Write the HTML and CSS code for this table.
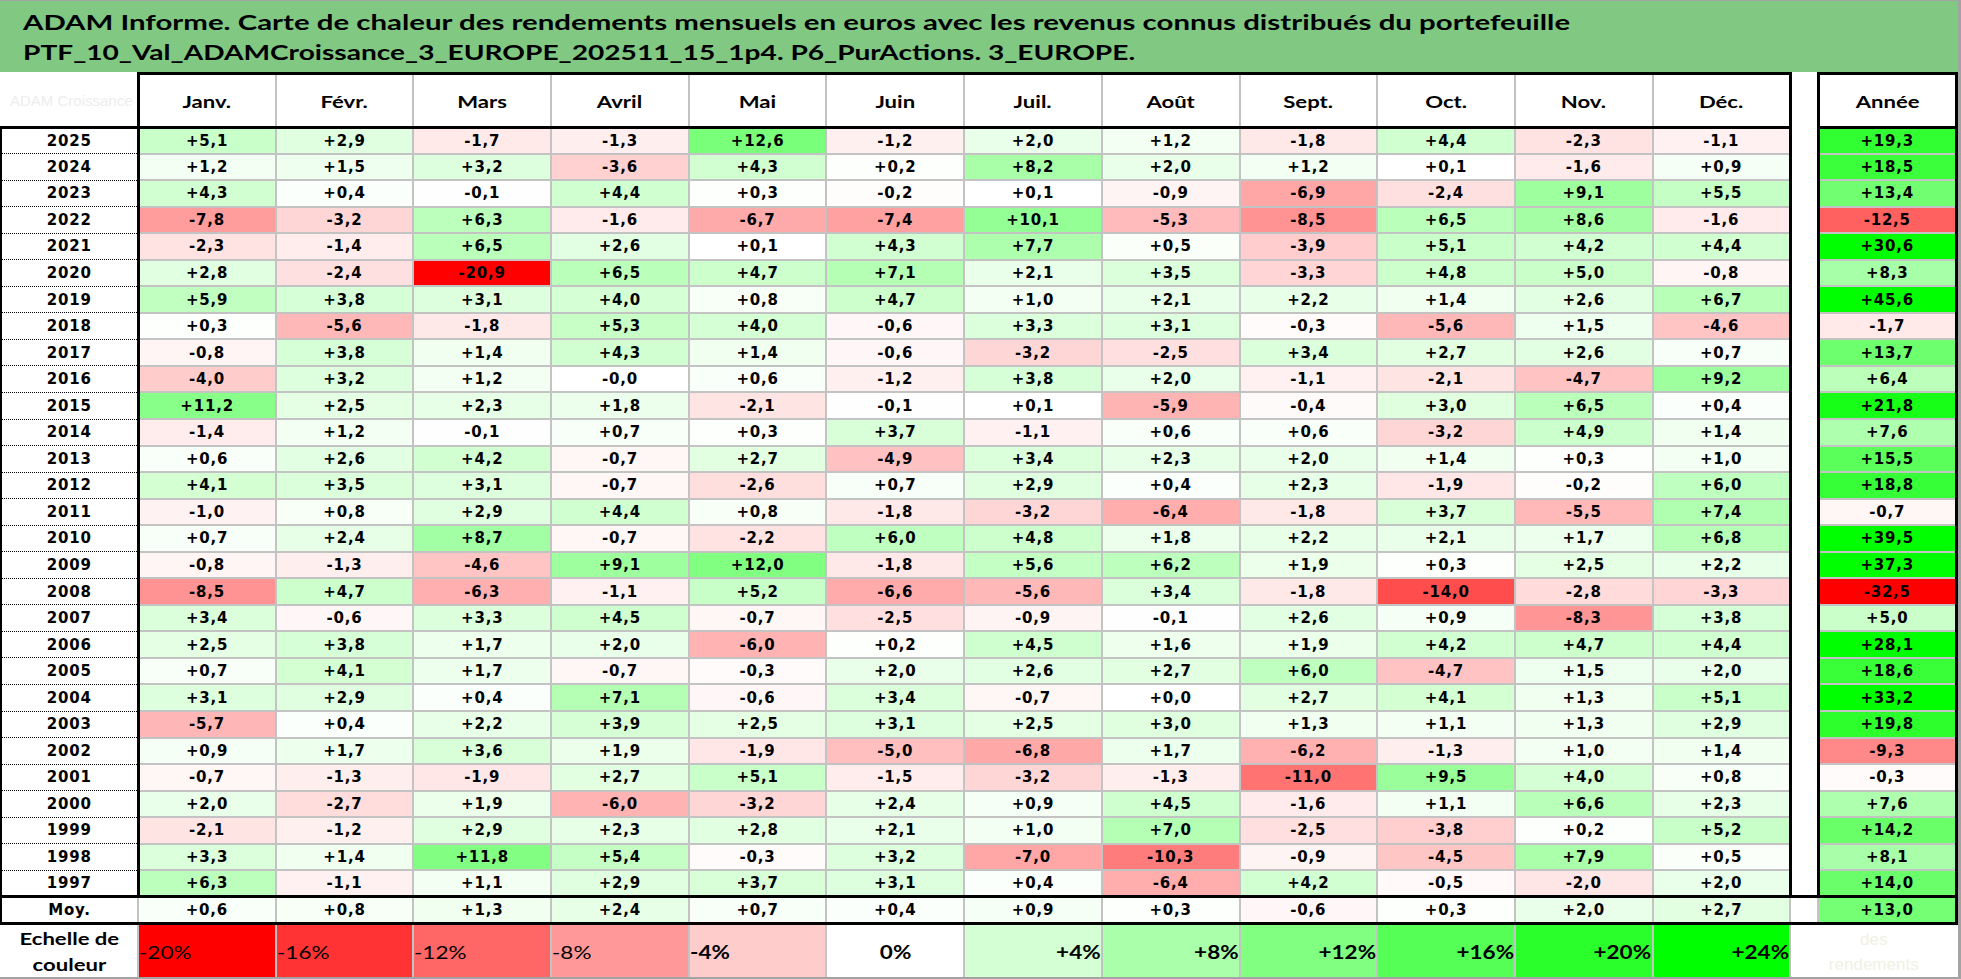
FILE: index.html
```html
<!DOCTYPE html>
<html lang="fr">
<head>
<meta charset="utf-8">
<title>ADAM Informe – Carte de chaleur</title>
<link rel="stylesheet" href="styles.css">
</head>
<body>
<div class="frame">
  <div class="title">
    <div class="title-line"><span class="stretch l1">ADAM Informe. Carte de chaleur des rendements mensuels en euros avec les revenus connus distribués du portefeuille</span></div>
    <div class="title-line"><span class="stretch l2">PTF_10_Val_ADAMCroissance_3_EUROPE_202511_15_1p4. P6_PurActions. 3_EUROPE.</span></div>
  </div>
  <table class="heat">
    <colgroup>
      <col class="c-lab">
      <col class="c-m"><col class="c-m"><col class="c-m"><col class="c-m"><col class="c-m"><col class="c-m">
      <col class="c-m"><col class="c-m"><col class="c-m"><col class="c-m"><col class="c-m"><col class="c-m">
      <col class="c-gap">
      <col class="c-yr">
    </colgroup>
    <thead>
      <tr class="hdr">
        <th class="corner"><div class="ghost">ADAM Croissance</div></th>
        <th class="mh"><span class="hx">Janv.</span></th>
        <th class="mh"><span class="hx">Févr.</span></th>
        <th class="mh"><span class="hx">Mars</span></th>
        <th class="mh"><span class="hx">Avril</span></th>
        <th class="mh"><span class="hx">Mai</span></th>
        <th class="mh"><span class="hx">Juin</span></th>
        <th class="mh"><span class="hx">Juil.</span></th>
        <th class="mh"><span class="hx">Août</span></th>
        <th class="mh"><span class="hx">Sept.</span></th>
        <th class="mh"><span class="hx">Oct.</span></th>
        <th class="mh"><span class="hx">Nov.</span></th>
        <th class="mh last"><span class="hx">Déc.</span></th>
        <th class="gap"></th>
        <th class="yh"><span class="hx">Année</span></th>
      </tr>
    </thead>
    <tbody id="rows"></tbody>
    <tbody>
      <tr class="scale">
        <th class="sc-lab"><span class="hx">Echelle de<br>couleur</span></th>
        <td class="sc neg s-20"><span class="sx">-20%</span></td>
        <td class="sc neg s-16"><span class="sx">-16%</span></td>
        <td class="sc neg s-12"><span class="sx">-12%</span></td>
        <td class="sc neg s-8"><span class="sx">-8%</span></td>
        <td class="sc neg b s-4"><span class="sx">-4%</span></td>
        <td class="sc zero s0"><span class="sx">0%</span></td>
        <td class="sc pos s4"><span class="sx">+4%</span></td>
        <td class="sc pos s8"><span class="sx">+8%</span></td>
        <td class="sc pos s12"><span class="sx">+12%</span></td>
        <td class="sc pos s16"><span class="sx">+16%</span></td>
        <td class="sc pos s20"><span class="sx">+20%</span></td>
        <td class="sc pos s24"><span class="sx">+24%</span></td>
        <td class="sc-end" colspan="2">des<br>rendements</td>
      </tr>
    </tbody>
  </table>
</div>
<script src="script.js"></script>
</body>
</html>
```

FILE: styles.css
```css
* { box-sizing: border-box; }
html, body { margin: 0; padding: 0; background: #ffffff; }

.frame {
  width: 1961px;
  height: 979px;
  border-top: 1px solid #a3a3a3;
  border-right: 3px solid #a3a3a3;
  border-bottom: 2px solid #a3a3a3;
  overflow: hidden;
  background: #ffffff;
}

.title {
  height: 71px;
  background: #81c983;
  padding: 6px 0 0 23px;
  font-family: Lato, "Liberation Sans", sans-serif;
  font-weight: 700;
  font-size: 20px;
  line-height: 30px;
  color: #000;
  white-space: nowrap;
  overflow: hidden;
}
.title .stretch {
  display: inline-block;
  transform-origin: left center;
}
.title .l1 { transform: scaleX(1.47); }
.title .l2 { transform: scaleX(1.405); }

.heat {
  border-collapse: collapse;
  table-layout: fixed;
  width: 1956px;
}
.c-lab { width: 137px; }
.c-m { width: 137.7px; }
.c-gap { width: 28px; }
.c-yr { width: 138px; }

.heat th, .heat td {
  padding: 0;
  text-align: center;
  vertical-align: middle;
  overflow: hidden;
  white-space: nowrap;
  color: #000;
}

.hx {
  display: inline-block;
  transform: scaleX(1.3);
}

/* header */
.hdr { height: 53.5px; }
.hdr th {
  font-family: Lato, "Liberation Sans", sans-serif;
  font-weight: 700;
  font-size: 17px;
  padding-top: 2px;
}
.corner { border-right: 3px solid #000; border-bottom: 3px solid #000; }
.ghost {
  display: flex;
  justify-content: flex-end;
  overflow: hidden;
  font-family: "Liberation Sans", sans-serif;
  font-weight: 400;
  font-size: 15px;
  color: #ededed;
  padding-right: 4px;
}
.mh {
  border-top: 3px solid #000;
  border-bottom: 3px solid #000;
  border-left: 2px solid #c3c3c3;
  border-right: 2px solid #c3c3c3;
}
.mh.last { border-right: 3px solid #000; }
.gap { border: none; background: #ffffff; }
.yh { border: 3px solid #000; }

/* data rows */
tr.d { height: 26.55px; }
.lab, .m, .yr {
  font-family: "DejaVu Sans", Verdana, sans-serif;
  font-weight: 700;
  font-size: 15px;
  letter-spacing: 0.8px;
}
tr.d .lab {
  border-left: 2px solid #000;
  border-right: 3px solid #000;
  border-bottom: 1px dotted #000;
}
.m, .yr { border: 2px solid #c3c3c3; }
tr.d .dec { border-right: 3px solid #000; }
tr.d .yr { border-left: 3px solid #000; border-right: 3px solid #000; }
tr.last td, tr.last th { border-bottom: 3px solid #000; }

/* average row */
tr.moy { height: 26.5px; }
tr.moy td, tr.moy th { border-top: 3px solid #000; border-bottom: 3px solid #000; }
tr.moy .lab { border-left: 2px solid #000; border-right: 2px solid #c3c3c3; }
tr.moy .gap { border-left: 2px solid #c3c3c3; border-right: 2px solid #c3c3c3; }
tr.moy .yr { border-right: 3px solid #000; }

/* colour scale row */
tr.scale { height: 55px; }
.heat .sc-lab {
  font-family: Lato, "Liberation Sans", sans-serif;
  font-weight: 700;
  font-size: 17px;
  line-height: 26px;
  border-right: 2px solid #c3c3c3;
}
.sc {
  font-family: Lato, "Liberation Sans", sans-serif;
  font-weight: 700;
  font-size: 18px;
  border-left: 2px solid #c3c3c3;
  border-right: 2px solid #c3c3c3;
  padding: 0 3px;
}
.sx {
  display: inline-block;
  transform: scaleX(1.25);
}
.heat .sc.neg { text-align: left; font-weight: 400; }
.heat .sc.neg .sx { transform-origin: left center; }
.heat .sc.neg.b { font-weight: 700; }
.heat .sc.zero { text-align: center; }
.heat .sc.pos { text-align: right; }
.heat .sc.pos .sx { transform-origin: right center; }
.s-20 { background: #ff0000; }
.s-16 { background: #ff3333; }
.s-12 { background: #ff6666; }
.s-8 { background: #ff9999; }
.s-4 { background: #ffcccc; }
.s0 { background: #ffffff; }
.s4 { background: #d4ffd4; }
.s8 { background: #aaffaa; }
.s12 { background: #80ff80; }
.s16 { background: #55ff55; }
.s20 { background: #2bff2b; }
.s24 { background: #00ff00; }
.heat .sc-end {
  font-family: "Liberation Sans", sans-serif;
  font-size: 17px;
  line-height: 25px;
  color: #f0f0e4;
}
```

FILE: script.js
```js
(function () {
  var rows = [
    ["2025","+5,1","+2,9","-1,7","-1,3","+12,6","-1,2","+2,0","+1,2","-1,8","+4,4","-2,3","-1,1","+19,3"],
    ["2024","+1,2","+1,5","+3,2","-3,6","+4,3","+0,2","+8,2","+2,0","+1,2","+0,1","-1,6","+0,9","+18,5"],
    ["2023","+4,3","+0,4","-0,1","+4,4","+0,3","-0,2","+0,1","-0,9","-6,9","-2,4","+9,1","+5,5","+13,4"],
    ["2022","-7,8","-3,2","+6,3","-1,6","-6,7","-7,4","+10,1","-5,3","-8,5","+6,5","+8,6","-1,6","-12,5"],
    ["2021","-2,3","-1,4","+6,5","+2,6","+0,1","+4,3","+7,7","+0,5","-3,9","+5,1","+4,2","+4,4","+30,6"],
    ["2020","+2,8","-2,4","-20,9","+6,5","+4,7","+7,1","+2,1","+3,5","-3,3","+4,8","+5,0","-0,8","+8,3"],
    ["2019","+5,9","+3,8","+3,1","+4,0","+0,8","+4,7","+1,0","+2,1","+2,2","+1,4","+2,6","+6,7","+45,6"],
    ["2018","+0,3","-5,6","-1,8","+5,3","+4,0","-0,6","+3,3","+3,1","-0,3","-5,6","+1,5","-4,6","-1,7"],
    ["2017","-0,8","+3,8","+1,4","+4,3","+1,4","-0,6","-3,2","-2,5","+3,4","+2,7","+2,6","+0,7","+13,7"],
    ["2016","-4,0","+3,2","+1,2","-0,0","+0,6","-1,2","+3,8","+2,0","-1,1","-2,1","-4,7","+9,2","+6,4"],
    ["2015","+11,2","+2,5","+2,3","+1,8","-2,1","-0,1","+0,1","-5,9","-0,4","+3,0","+6,5","+0,4","+21,8"],
    ["2014","-1,4","+1,2","-0,1","+0,7","+0,3","+3,7","-1,1","+0,6","+0,6","-3,2","+4,9","+1,4","+7,6"],
    ["2013","+0,6","+2,6","+4,2","-0,7","+2,7","-4,9","+3,4","+2,3","+2,0","+1,4","+0,3","+1,0","+15,5"],
    ["2012","+4,1","+3,5","+3,1","-0,7","-2,6","+0,7","+2,9","+0,4","+2,3","-1,9","-0,2","+6,0","+18,8"],
    ["2011","-1,0","+0,8","+2,9","+4,4","+0,8","-1,8","-3,2","-6,4","-1,8","+3,7","-5,5","+7,4","-0,7"],
    ["2010","+0,7","+2,4","+8,7","-0,7","-2,2","+6,0","+4,8","+1,8","+2,2","+2,1","+1,7","+6,8","+39,5"],
    ["2009","-0,8","-1,3","-4,6","+9,1","+12,0","-1,8","+5,6","+6,2","+1,9","+0,3","+2,5","+2,2","+37,3"],
    ["2008","-8,5","+4,7","-6,3","-1,1","+5,2","-6,6","-5,6","+3,4","-1,8","-14,0","-2,8","-3,3","-32,5"],
    ["2007","+3,4","-0,6","+3,3","+4,5","-0,7","-2,5","-0,9","-0,1","+2,6","+0,9","-8,3","+3,8","+5,0"],
    ["2006","+2,5","+3,8","+1,7","+2,0","-6,0","+0,2","+4,5","+1,6","+1,9","+4,2","+4,7","+4,4","+28,1"],
    ["2005","+0,7","+4,1","+1,7","-0,7","-0,3","+2,0","+2,6","+2,7","+6,0","-4,7","+1,5","+2,0","+18,6"],
    ["2004","+3,1","+2,9","+0,4","+7,1","-0,6","+3,4","-0,7","+0,0","+2,7","+4,1","+1,3","+5,1","+33,2"],
    ["2003","-5,7","+0,4","+2,2","+3,9","+2,5","+3,1","+2,5","+3,0","+1,3","+1,1","+1,3","+2,9","+19,8"],
    ["2002","+0,9","+1,7","+3,6","+1,9","-1,9","-5,0","-6,8","+1,7","-6,2","-1,3","+1,0","+1,4","-9,3"],
    ["2001","-0,7","-1,3","-1,9","+2,7","+5,1","-1,5","-3,2","-1,3","-11,0","+9,5","+4,0","+0,8","-0,3"],
    ["2000","+2,0","-2,7","+1,9","-6,0","-3,2","+2,4","+0,9","+4,5","-1,6","+1,1","+6,6","+2,3","+7,6"],
    ["1999","-2,1","-1,2","+2,9","+2,3","+2,8","+2,1","+1,0","+7,0","-2,5","-3,8","+0,2","+5,2","+14,2"],
    ["1998","+3,3","+1,4","+11,8","+5,4","-0,3","+3,2","-7,0","-10,3","-0,9","-4,5","+7,9","+0,5","+8,1"],
    ["1997","+6,3","-1,1","+1,1","+2,9","+3,7","+3,1","+0,4","-6,4","+4,2","-0,5","-2,0","+2,0","+14,0"]
  ];
  var moy = ["Moy.","+0,6","+0,8","+1,3","+2,4","+0,7","+0,4","+0,9","+0,3","-0,6","+0,3","+2,0","+2,7","+13,0"];

  function parse(s) { return parseFloat(s.replace(",", ".")); }
  function bg(v) {
    var c;
    if (v < 0) {
      c = Math.round(255 * (1 - Math.min(1, -v / 20)));
      return "rgb(255," + c + "," + c + ")";
    }
    c = Math.round(255 * (1 - Math.min(1, v / 24)));
    return "rgb(" + c + ",255," + c + ")";
  }

  var tb = document.getElementById("rows");
  function build(r, cls) {
    var tr = document.createElement("tr");
    tr.className = cls;
    var th = document.createElement("th");
    th.className = "lab";
    th.textContent = r[0];
    tr.appendChild(th);
    for (var i = 1; i <= 12; i++) {
      var td = document.createElement("td");
      td.className = "m" + (i === 12 ? " dec" : "");
      td.textContent = r[i];
      td.style.background = bg(parse(r[i]));
      tr.appendChild(td);
    }
    var g = document.createElement("td");
    g.className = "gap";
    tr.appendChild(g);
    var y = document.createElement("td");
    y.className = "yr";
    y.textContent = r[13];
    y.style.background = bg(parse(r[13]));
    tr.appendChild(y);
    tb.appendChild(tr);
  }
  for (var k = 0; k < rows.length; k++) {
    build(rows[k], "d" + (k === rows.length - 1 ? " last" : ""));
  }
  build(moy, "moy");
})();
```
